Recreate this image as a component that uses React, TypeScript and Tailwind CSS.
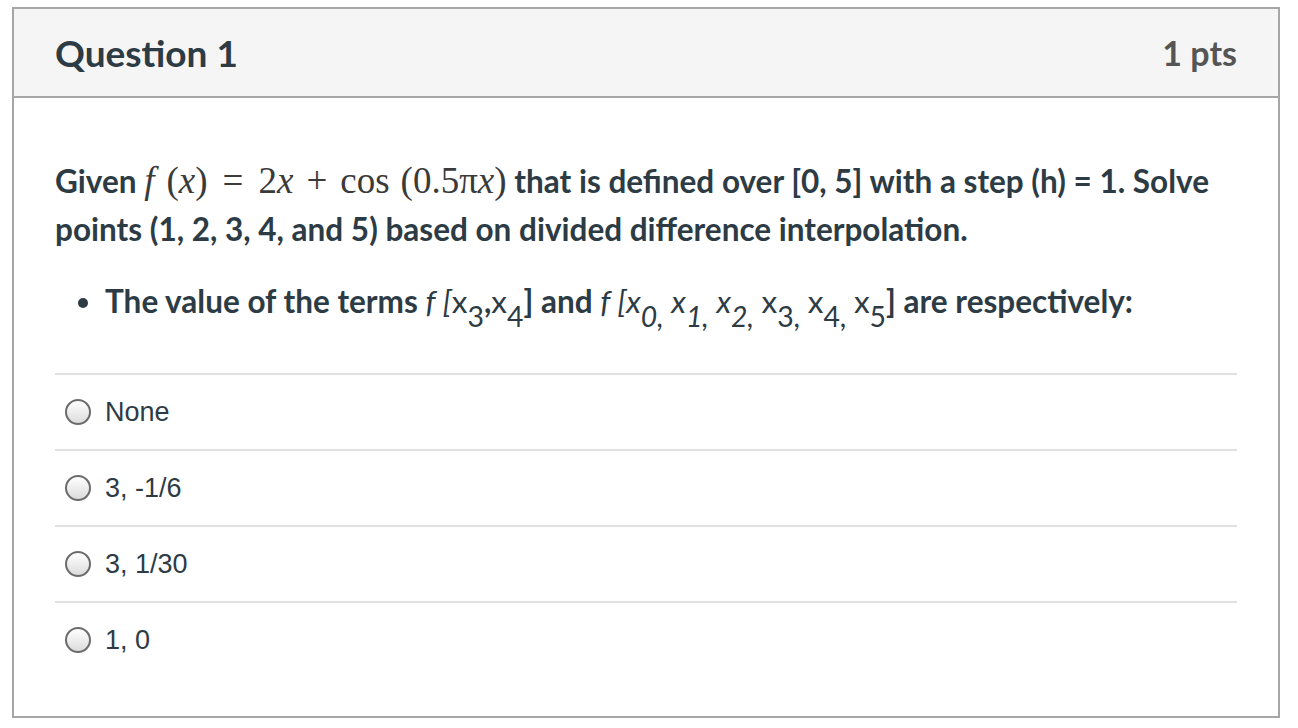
const lato = { fontFamily: "Lato, 'Open Sans', sans-serif" };

function M({ children, i, cls }: { children: React.ReactNode; i?: boolean; cls?: string }) {
  return (
    <span
      className={`font-normal text-[#3a3a3a] ${i ? "italic" : ""} ${cls ?? ""}`}
      style={{ fontFamily: "'Liberation Serif', 'DejaVu Serif', serif" }}
    >
      {children}
    </span>
  );
}

function Sub({ x, n, italic }: { x: string; n: string; italic?: boolean }) {
  return (
    <span className={`font-normal ${italic ? "italic" : ""}`}>
      {x}
      <sub className="text-[0.9em] align-[-0.25em] leading-none">{n}</sub>
    </span>
  );
}

const options = ["None", "3, -1/6", "3, 1/30", "1, 0"];

function Radio() {
  return (
    <span className="inline-block w-[26px] h-[26px] rounded-full border-2 border-[#6b6b6b] bg-gradient-to-b from-white to-[#dcdcdc] shrink-0" />
  );
}

export default function App() {
  return (
    <div className="min-h-screen bg-white pt-[7px] pl-3">
      <div
        className="w-[1268px] h-[711px] border-2 border-[#a6a6a6] text-[#2d3b45]"
        style={lato}
      >
        <div className="h-[89px] bg-[#f5f5f5] border-b-2 border-[#a6a6a6] flex items-center justify-between px-[41px]">
          <h2 className="text-[37px] font-bold leading-none">Question 1</h2>
          <span className="text-[34px] font-bold text-[#555555] leading-none">1 pts</span>
        </div>
        <div className="px-[41px] pt-[59px]">
          <p className="text-[31.5px] font-bold leading-[48px]">
            Given{" "}
            <span className="text-[37px] leading-none">
              <M i>f</M>
              <M cls="ml-[12px]">(</M>
              <M i>x</M>
              <M>)</M>
              <M cls="mx-[15px]">=</M>
              <M>2</M>
              <M i>x</M>
              <M cls="mx-[13px]">+</M>
              <M>cos</M>
              <M cls="ml-[11px]">(0.5π</M>
              <M i>x</M>
              <M>)</M>
            </span>{" "}
            that is defined over [0, 5] with a step (h) = 1. Solve points (1, 2, 3, 4, and 5) based on divided
            difference interpolation.
          </p>
          <ul className="mt-6 text-[31.5px] font-bold leading-[48px] list-disc pl-[50px]">
            <li className="pl-0">
              The value of the terms <span className="italic font-normal">f [</span>
              <Sub x="x" n="3" />,<Sub x="x" n="4" />] and <span className="italic font-normal">f [</span>
              <Sub x="x" n="0," italic /> <Sub x="x" n="1," italic /> <Sub x="x" n="2," italic />{" "}
              <Sub x="x" n="3," /> <Sub x="x" n="4," /> <Sub x="x" n="5" />] are respectively:
            </li>
          </ul>
          <div className="mt-[48px]">
            {options.map((o) => (
              <div
                key={o}
                className="h-[76px] border-t-2 border-[#e0e0e0] flex items-center pl-[10px] gap-[14px]"
              >
                <Radio />
                <span
                  className="text-[27px] text-[#2d3b45]"
                  style={{ fontFamily: "'Liberation Sans', Arial, sans-serif" }}
                >
                  {o}
                </span>
              </div>
            ))}
          </div>
        </div>
      </div>
    </div>
  );
}
